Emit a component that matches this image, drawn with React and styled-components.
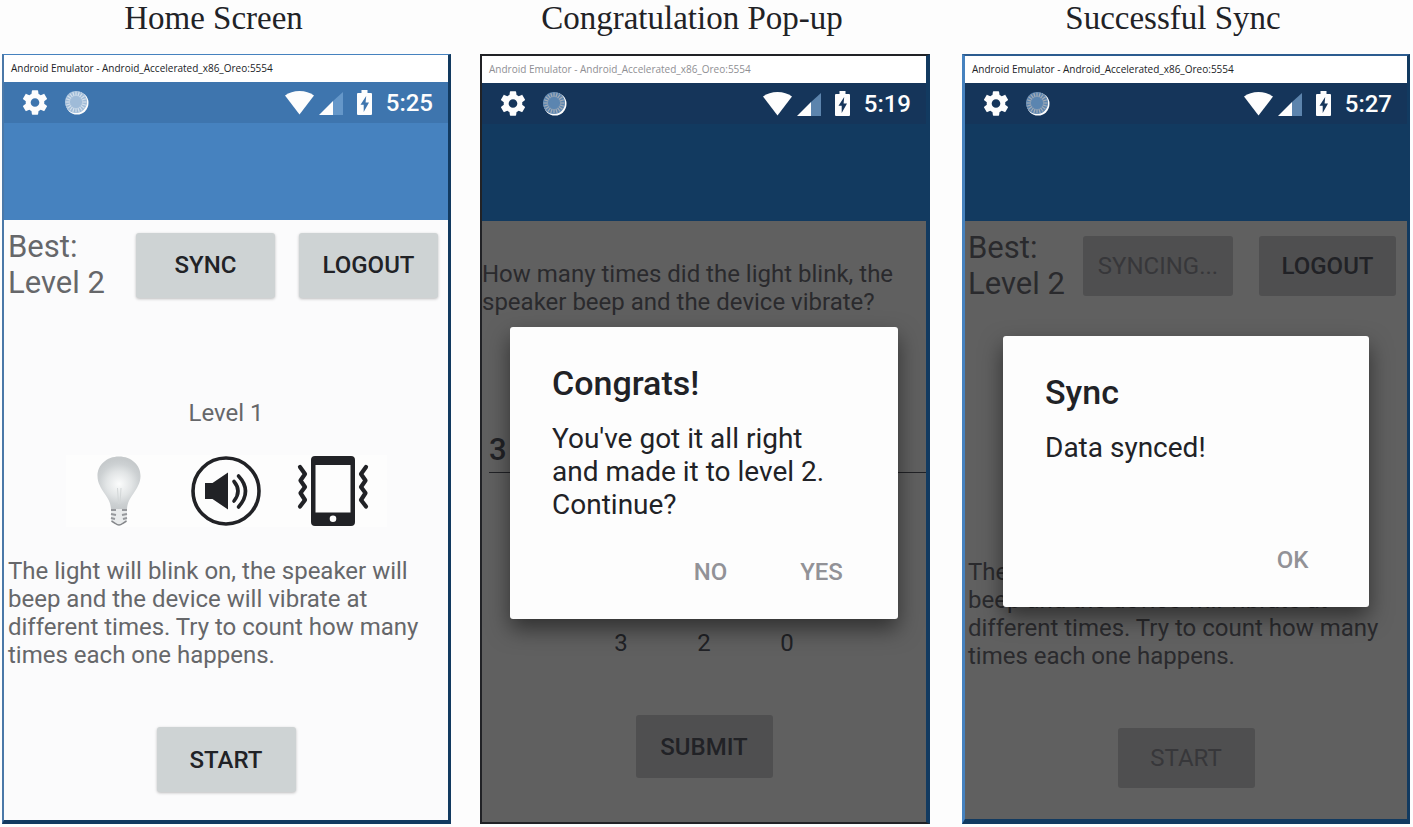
import React from "react";
import styled, { createGlobalStyle, css } from "styled-components";

const GlobalStyle = createGlobalStyle`
  * { box-sizing: border-box; }
  body {
    margin: 0;
    background: #fdfdfd;
    color: #212226;
    font-family: Roboto, "Liberation Sans", sans-serif;
  }
  h1, h2, p { margin: 0; font-weight: 400; }
  button, input { font: inherit; color: inherit; margin: 0; }
`;

const skins = {
  light: {
    bar: "#4682bf",
    status: "#3e75ae",
    surface: "#fbfbfc",
    text: "#66676a",
    button: "#ced3d4",
    buttonText: "#212226",
    disabledText: "#212226",
    signal: "#6597c9",
    orb: "#9fbbd8",
    ray: "#d3dfeb",
  },
  dim: {
    bar: "#123a60",
    status: "#15355a",
    surface: "#606060",
    text: "#2a2a2d",
    button: "#4f4f50",
    buttonText: "#212226",
    disabledText: "#37373a",
    signal: "#5c84ad",
    orb: "#5b85b0",
    ray: "#a4acb6",
  },
};

const Page = styled.main`
  display: grid;
  grid-template-columns: minmax(0, 449fr) minmax(0, 450fr) minmax(0, 451fr);
  gap: 29px;
  padding: 0 3px 3px 2px;
`;

const Figure = styled.section`
  display: flex;
  flex-direction: column;
  padding-left: ${(p) => p.$before || 0}px;
`;

const Caption = styled.h1`
  height: 36px;
  margin-bottom: 18px;
  padding-right: 26px;
  font-family: "Liberation Serif", serif;
  font-size: 33px;
  line-height: 36px;
  text-align: center;
  white-space: nowrap;
`;

const frames = {
  blue: css`
    border-width: 1px 3px 4px 2px;
    border-color: #4682bf #123a60 #123a60 #4a78a8;
  `,
  dark: css`
    border-width: 2px 4px 2px 2px;
    border-color: #212226 #123a60 #212226 #212226;
  `,
  navy: css`
    border-width: 2px 3px 5px 3px;
    border-color: #2c5c90 #123a60 #123a60 #4682bf;
  `,
};

const Frame = styled.div`
  flex: 1;
  display: flex;
  flex-direction: column;
  border-style: solid;
  ${(p) => frames[p.$kind]}
`;

const TitleBar = styled.div`
  height: 27px;
  padding-left: 7px;
  background: #fff;
  color: ${(p) => (p.$inactive ? "#8f8f94" : "#212226")};
  font-family: "Open Sans", "Noto Sans", sans-serif;
  font-size: 10px;
  line-height: 27px;
  white-space: nowrap;
`;

const Screen = styled.div`
  position: relative;
  flex: 1;
  display: flex;
  flex-direction: column;
  background: ${(p) => p.$skin.surface};
  color: ${(p) => p.$skin.text};
`;

const StatusBar = styled.div`
  display: flex;
  align-items: center;
  justify-content: space-between;
  height: 41px;
  padding: 0 15px 0 19px;
  background: ${(p) => p.$skin.status};
  color: #fdfdfd;
`;

const StatusGroup = styled.div`
  display: flex;
  align-items: center;
  svg { display: block; }
`;

const LeftGroup = styled(StatusGroup)`
  gap: 18px;
`;

const RightGroup = styled(StatusGroup)`
  gap: 14px;
`;

const Radios = styled(StatusGroup)`
  gap: 5px;
`;

const Clock = styled.time`
  font-size: 24px;
  font-weight: 500;
  line-height: 28px;
`;

const AppBar = styled.div`
  height: 97px;
  background: ${(p) => p.$skin.bar};
`;

const TopRow = styled.div`
  display: flex;
  align-items: center;
  height: 72px;
  margin-top: 9px;
  padding: 0 ${(p) => p.$end}px 0 ${(p) => p.$start}px;
`;

const Best = styled.p`
  flex: 1;
  font-size: 31px;
  line-height: 36px;
`;

const TopActions = styled.div`
  display: flex;
  gap: ${(p) => p.$gap}px;
`;

const AppButton = styled.button`
  width: ${(p) => p.$width}px;
  height: ${(p) => p.$height}px;
  padding: 0;
  border: 0;
  border-radius: 3px;
  background: ${(p) => p.$skin.button};
  color: ${(p) => p.$skin.buttonText};
  font-size: 24px;
  font-weight: 500;
  box-shadow: ${(p) => (p.$skin === skins.light ? "0 1px 3px rgba(0, 0, 0, 0.25)" : "none")};
  &:disabled { color: ${(p) => p.$skin.disabledText}; font-weight: 400; }
`;

const Level = styled.h2`
  height: 28px;
  margin-top: 98px;
  font-size: 24px;
  line-height: 28px;
  text-align: center;
`;

const Signals = styled.div`
  align-self: center;
  display: grid;
  grid-template-columns: repeat(3, 107px);
  justify-items: center;
  align-items: center;
  height: 72px;
  margin-top: 28px;
  background: ${(p) => (p.$empty ? "none" : "#fdfdfd")};
  svg { display: block; }
`;

const Copy = styled.p`
  padding-left: ${(p) => p.$inset}px;
  margin-top: ${(p) => p.$top}px;
  font-size: 24px;
  line-height: 28px;
`;

const Bottom = styled.div`
  display: flex;
  justify-content: center;
  margin-top: 58px;
  padding-bottom: ${(p) => p.$below}px;
`;

const Answer = styled.input`
  height: 44px;
  margin: 113px 0 0 7px;
  padding: 0 0 2px;
  border: 0;
  border-bottom: 1px solid #212226;
  border-radius: 0;
  outline: 0;
  background: transparent;
  color: #212226;
  font-size: 31px;
  font-weight: 500;
`;

const Counts = styled.div`
  display: grid;
  grid-template-columns: repeat(3, 83px);
  justify-content: center;
  margin-top: 156px;
  color: #212226;
  font-size: 24px;
  line-height: 28px;
  text-align: center;
`;

const Overlay = styled.div`
  position: absolute;
  inset: 41px 0 0;
  display: flex;
  align-items: center;
  padding: 0 ${(p) => p.$side}px;
`;

const Dialog = styled.div`
  flex: 1;
  padding: 35px 21px 23px 42px;
  border-radius: 3px;
  background: #fdfdfd;
  color: #212226;
  box-shadow: 0 10px 22px rgba(0, 0, 0, 0.5);
`;

const DialogTitle = styled.h2`
  font-size: 34px;
  font-weight: 500;
  line-height: 42px;
`;

const DialogText = styled.p`
  min-height: 78px;
  margin: 18px 0 27px;
  padding-right: 32px;
  font-size: 28px;
  line-height: 33px;
`;

const DialogActions = styled.div`
  display: flex;
  justify-content: flex-end;
`;

const DialogButton = styled.button`
  width: 111px;
  height: 48px;
  padding: 0;
  border: 0;
  background: none;
  color: #929297;
  font-size: 24px;
  font-weight: 500;
`;

function Gear() {
  return (
    <svg width="24" height="25" viewBox="2.300 2 19.400 20" fill="currentColor" aria-hidden="true">
      <path d="M19.43 12.98c.04-.32.07-.64.07-.98s-.03-.66-.07-.98l2.11-1.65c.19-.15.24-.42.12-.64l-2-3.46c-.12-.22-.39-.3-.61-.22l-2.49 1c-.52-.4-1.08-.73-1.69-.98l-.38-2.65C14.46 2.18 14.25 2 14 2h-4c-.25 0-.46.18-.49.42l-.38 2.65c-.61.25-1.17.59-1.69.98l-2.49-1c-.23-.09-.49 0-.61.22l-2 3.46c-.13.22-.07.49.12.64l2.11 1.65c-.04.32-.07.65-.07.98s.03.66.07.98l-2.11 1.65c-.19.15-.24.42-.12.64l2 3.46c.12.22.39.3.61.22l2.49-1c.52.4 1.08.73 1.69.98l.38 2.65c.03.24.24.42.49.42h4c.25 0 .46-.18.49-.42l.38-2.65c.61-.25 1.17-.59 1.69-.98l2.49 1c.23.09.49 0 .61-.22l2-3.46c.12-.22.07-.49-.12-.64l-2.11-1.65zM12 15.5c-1.93 0-3.5-1.57-3.5-3.5s1.57-3.5 3.5-3.5 3.5 1.57 3.5 3.5-1.57 3.5-3.5 3.5z" />
    </svg>
  );
}

function Orb({ skin }) {
  const rays = Array.from({ length: 20 }, (_, i) => i * 18);
  return (
    <svg width="24" height="24" viewBox="0 0 24 24" aria-hidden="true">
      <circle cx="12" cy="12" r="11.5" fill="#fdfdfd" />
      <circle cx="11" cy="11" r="11" fill={skin.orb} />
      <g stroke={skin.ray} strokeWidth="1.200">
        {rays.map((a) => (
          <line key={a} x1="11" y1="5" x2="11" y2="0.5" transform={`rotate(${a} 11 11)`} />
        ))}
      </g>
    </svg>
  );
}

function Wifi() {
  return (
    <svg width="29" height="24" viewBox="0 0 29 24" fill="currentColor" aria-hidden="true">
      <path d="M0 4.6Q6 0 14.5 0T29 4.6L14.5 23.5z" />
    </svg>
  );
}

function Signal({ skin }) {
  return (
    <svg width="24" height="24" viewBox="0 0 24 24" aria-hidden="true">
      <path d="M14 10L24 1v23H14z" fill={skin.signal} />
      <path d="M0 24L14 10v14z" fill="#fdfdfd" />
    </svg>
  );
}

function Battery() {
  return (
    <svg width="15" height="25" viewBox="0 0 15 25" fill="currentColor" aria-hidden="true">
      <path fillRule="evenodd" d="M4.500 0h6v3H14q1 0 1 1v20q0 1-1 1H1q-1 0-1-1V4q0-1 1-1h3.500zM9.200 6L3.500 14.700h3.200V22L12 12.500H8.600z" />
    </svg>
  );
}

function Bulb() {
  return (
    <svg width="44" height="70" viewBox="0 0 44 70" role="img" aria-label="Light">
      <defs>
        <radialGradient id="glass" cx="22" cy="28" r="25" gradientUnits="userSpaceOnUse">
          <stop offset="0" stopColor="#fbfcfc" />
          <stop offset="0.5" stopColor="#e2e5e6" />
          <stop offset="0.8" stopColor="#cdd1d3" />
          <stop offset="1" stopColor="#c6cacc" />
        </radialGradient>
      </defs>
      <path d="M22 0.500C9.500.5.500 9 .5 20c0 7 3.500 12 7 17.500 4 6 6 9 6.500 15.500h16c.5-6.500 2.500-9.500 6.500-15.500 3.500-5.500 7-10.500 7-17.500C43.500 9 34.500.5 22 .5z" fill="url(#glass)" />
      <path d="M20.500 32l1 16M24 32l-1 16" stroke="#d3d7d8" fill="none" />
      <path d="M14 53h16v12l-4 2.500q-4 3.500-8 0L14 65z" fill="#e9ebec" />
      <path d="M14 54h5M25 54h5M14 58l5 1M25 59l5-1M14 62l4 1M26 63l4-1" stroke="#96989c" strokeWidth="2" fill="none" />
      <path d="M14.500 65l4 2.500q3.500 3 7 0l4-2.500" stroke="#85878b" strokeWidth="1.500" fill="none" />
    </svg>
  );
}

function Speaker() {
  return (
    <svg width="70" height="70" viewBox="0 0 70 70" role="img" aria-label="Speaker" fill="none" stroke="#212226">
      <circle cx="35" cy="35" r="33" strokeWidth="3.600" />
      <path d="M14 27h7.500L37 16.500v37L21.500 43H14z" fill="#212226" stroke="none" />
      <g strokeWidth="3.600" strokeLinecap="round">
        <path d="M43 25.500q8 9.500 0 19.500" />
        <path d="M47.500 20q14 15 0 31" />
      </g>
    </svg>
  );
}

function Vibration() {
  return (
    <svg width="72" height="70" viewBox="0 0 72 70" role="img" aria-label="Vibration">
      <path fillRule="evenodd" fill="#212226" d="M18 0h36q4 0 4 4v62q0 4-4 4H18q-4 0-4-4V4q0-4 4-4zM18.500 9v47.500h35V9zM36 59.500a3.300 3.300 0 1 0 0 6.600 3.300 3.300 0 0 0 0-6.600z" />
      <g fill="none" stroke="#212226" strokeWidth="4.200" strokeLinecap="round" strokeLinejoin="round">
        <path d="M3 11l5 7-4.500 6.500L8 31l-4.500 6L8 44l-5 6.500" />
        <path d="M69 11l-5 7 4.500 6.500L64 31l4.500 6L64 44l5 6.500" />
      </g>
    </svg>
  );
}

function Phone({ caption, kind, skin, inactive, time, before, children }) {
  return (
    <Figure $before={before}>
      <Caption>{caption}</Caption>
      <Frame $kind={kind}>
        <TitleBar $inactive={inactive}>Android Emulator - Android_Accelerated_x86_Oreo:5554</TitleBar>
        <Screen $skin={skin}>
          <StatusBar $skin={skin}>
            <LeftGroup>
              <Gear />
              <Orb skin={skin} />
            </LeftGroup>
            <RightGroup>
              <Radios>
                <Wifi />
                <Signal skin={skin} />
              </Radios>
              <Battery />
              <Clock>{time}</Clock>
            </RightGroup>
          </StatusBar>
          <AppBar $skin={skin} />
          {children}
        </Screen>
      </Frame>
    </Figure>
  );
}

function Home({ skin, syncing }) {
  const width = syncing ? 137 : 139;
  const height = syncing ? 60 : 65;
  const inset = syncing ? 3 : 4;
  return (
    <>
      <TopRow $start={inset} $end={syncing ? 11 : 10}>
        <Best>
          Best:
          <br />
          Level 2
        </Best>
        <TopActions $gap={syncing ? 26 : 24}>
          <AppButton $skin={skin} $width={syncing ? 150 : width} $height={height} disabled={syncing}>
            {syncing ? "SYNCING..." : "SYNC"}
          </AppButton>
          <AppButton $skin={skin} $width={width} $height={height}>LOGOUT</AppButton>
        </TopActions>
      </TopRow>
      <Level>{!syncing && "Level 1"}</Level>
      <Signals $empty={syncing}>
        {!syncing && (
          <>
            <Bulb />
            <Speaker />
            <Vibration />
          </>
        )}
      </Signals>
      <Copy $inset={inset} $top={30}>
        The light will blink on, the speaker will beep and the device will vibrate at different times. Try to
        count how many times each one happens.
      </Copy>
      <Bottom $below={syncing ? 31 : 26}>
        <AppButton $skin={skin} $width={width} $height={height} disabled={syncing}>START</AppButton>
      </Bottom>
    </>
  );
}

function Popup({ title, text, actions, side }) {
  return (
    <Overlay $side={side}>
      <Dialog role="dialog" aria-label={title}>
        <DialogTitle>{title}</DialogTitle>
        <DialogText>{text}</DialogText>
        <DialogActions>
          {actions.map((a) => (
            <DialogButton key={a}>{a}</DialogButton>
          ))}
        </DialogActions>
      </Dialog>
    </Overlay>
  );
}

export default function App() {
  return (
    <>
      <GlobalStyle />
      <Page>
        <Phone caption="Home Screen" kind="blue" skin={skins.light} time="5:25">
          <Home skin={skins.light} />
        </Phone>
        <Phone caption="Congratulation Pop-up" kind="dark" skin={skins.dim} time="5:19" inactive>
          <Copy $inset={0} $top={39}>
            How many times did the light blink, the speaker beep and the device vibrate?
          </Copy>
          <Answer aria-label="Your answer" defaultValue="3" />
          <Counts>
            <span>3</span>
            <span>2</span>
            <span>0</span>
          </Counts>
          <Bottom $below={44}>
            <AppButton $skin={skins.dim} $width={137} $height={63}>SUBMIT</AppButton>
          </Bottom>
          <Popup
            title="Congrats!"
            text="You've got it all right and made it to level 2. Continue?"
            actions={["NO", "YES"]}
            side={28}
          />
        </Phone>
        <Phone caption="Successful Sync" kind="navy" skin={skins.dim} time="5:27" before={3}>
          <Home skin={skins.dim} syncing />
          <Popup title="Sync" text="Data synced!" actions={["OK"]} side={38} />
        </Phone>
      </Page>
    </>
  );
}
